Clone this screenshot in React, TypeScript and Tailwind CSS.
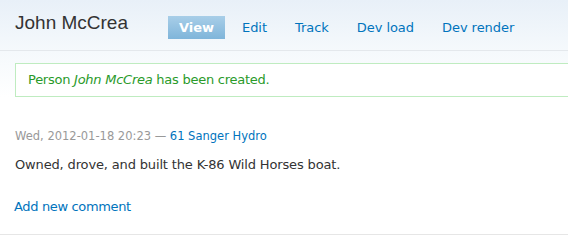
import React from 'react';

const tabs = ['View', 'Edit', 'Track', 'Dev load', 'Dev render'];

const App = () => {
    return (
        <div className="w-[568px] h-[250px] overflow-hidden bg-white font-['DejaVu_Sans',sans-serif] text-[#333]">
            {/* Header with title and tabs */}
            <div className="h-[51px] bg-gradient-to-b from-[#e8f0f8] to-[#f5f9fc] border-b border-[#e4e8ec] flex items-start">
                <h1 className="pl-[15px] pt-[11px] font-['Liberation_Sans',sans-serif] text-[19px] leading-[24px] text-[#333] w-[168px]">
                    John McCrea
                </h1>
                <ul className="flex items-center pt-[16px]">
                    {tabs.map((tab, i) => (
                        <li key={i}>
                            {i === 0 ? (
                                <span className="block h-[23px] w-[57px] mr-[17px] bg-gradient-to-b from-[#a8cee8] to-[#7fb5da] text-white font-bold text-[13px] leading-[23px] text-center">
                                    {tab}
                                </span>
                            ) : (
                                <span className="block text-[13px] leading-[23px] text-[#0074bd] mr-[28px] tracking-[-0.05px]">
                                    {tab}
                                </span>
                            )}
                        </li>
                    ))}
                </ul>
            </div>

            <div className="bg-gradient-to-b from-[#f5f9fc] to-white pt-[12px] pl-[15px]">
                <div className="h-[34px] border border-r-0 border-[#bfecc0] bg-white pl-[12px] text-[13px] leading-[32px] text-[#2a9a2a] tracking-[-0.25px]">
                    Person <em>John McCrea</em> has been created.
                </div>
            </div>

            <div className="px-[15px] pt-[32px]">
                <div className="text-[11.5px] leading-[14px] text-[#999]">
                    Wed, 2012-01-18 20:23 — <span className="text-[#0074bd]">61 Sanger Hydro</span>
                </div>
                <p className="mt-[14px] text-[13px] leading-[16px] tracking-[-0.15px]">
                    Owned, drove, and built the K-86 Wild Horses boat.
                </p>
                <div className="mt-[26px] text-[13px] leading-[16px] text-[#0074bd] tracking-[-0.35px] -ml-px">Add new comment</div>
            </div>
            <div className="mt-[19px] border-b border-[#e6e6e6]" />
        </div>
    );
};

export default App;
